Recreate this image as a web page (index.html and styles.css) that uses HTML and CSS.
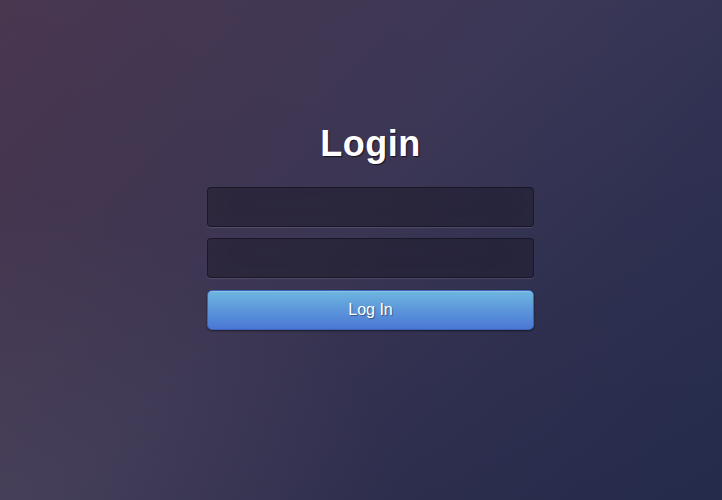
FILE: index.html
```html
<!DOCTYPE html>
<html lang="en">
<head>
<meta charset="utf-8">
<title>Login</title>
<link rel="stylesheet" href="styles.css">
</head>
<body>
<main class="page">
  <form class="login">
    <h1 class="login-title">Login</h1>
    <input class="field" type="text" name="u" aria-label="Username">
    <input class="field" type="password" name="p" aria-label="Password">
    <button class="btn" type="button">Log In</button>
  </form>
</main>
</body>
</html>
```
FILE: styles.css
```css
html, body {
  margin: 0;
  height: 100%;
}
body {
  font-family: "Liberation Sans", Arial, sans-serif;
  background:
    radial-gradient(ellipse 55% 60% at 0% 100%, rgba(110,110,130,0.2) 0%, rgba(110,110,130,0) 100%),
    linear-gradient(to bottom, rgba(60,80,130,0.12) 0%, rgba(0,0,0,0) 100%),
    linear-gradient(135deg, #4b3349 0%, #3b3450 45%, #2e2e4d 70%, #242b4b 100%);
  overflow: hidden;
}
.page {
  display: flex;
  justify-content: center;
  padding-top: 124px;
}
.login {
  width: 327px;
  margin-left: 19px;
  display: flex;
  flex-direction: column;
}
.login-title {
  margin: 0 0 23px;
  font-size: 36px;
  line-height: 40px;
  font-weight: bold;
  color: #fff;
  text-align: center;
  letter-spacing: 0.5px;
  text-shadow: 1px 1px 1px rgba(10,5,20,0.75), -1px 0 0 rgba(120,20,60,0.35);
}
.field {
  box-sizing: border-box;
  height: 40px;
  margin: 0 0 11px;
  padding: 10px;
  background: rgba(20,18,32,0.45);
  border: 1px solid rgba(15,12,25,0.55);
  border-radius: 4px;
  box-shadow: inset 0 -5px 45px rgba(100,100,100,0.08), 0 1px 1px rgba(255,255,255,0.12);
  color: #fff;
  font-size: 13px;
  outline: none;
}
.field + .field {
  margin-bottom: 12px;
}
.btn {
  box-sizing: border-box;
  height: 40px;
  padding: 0 0 1px;
  background: linear-gradient(to bottom, #6eb6e0, #4a77d4);
  border: 1px solid #3a63bc;
  border-radius: 5px;
  box-shadow: inset 0 1px 0 rgba(255,255,255,0.2), 0 1px 2px rgba(0,0,0,0.5);
  color: #fff;
  font-family: "Liberation Sans", Arial, sans-serif;
  font-size: 16px;
  text-shadow: 1px 1px 1px rgba(0,0,0,0.4);
  cursor: pointer;
}
```
